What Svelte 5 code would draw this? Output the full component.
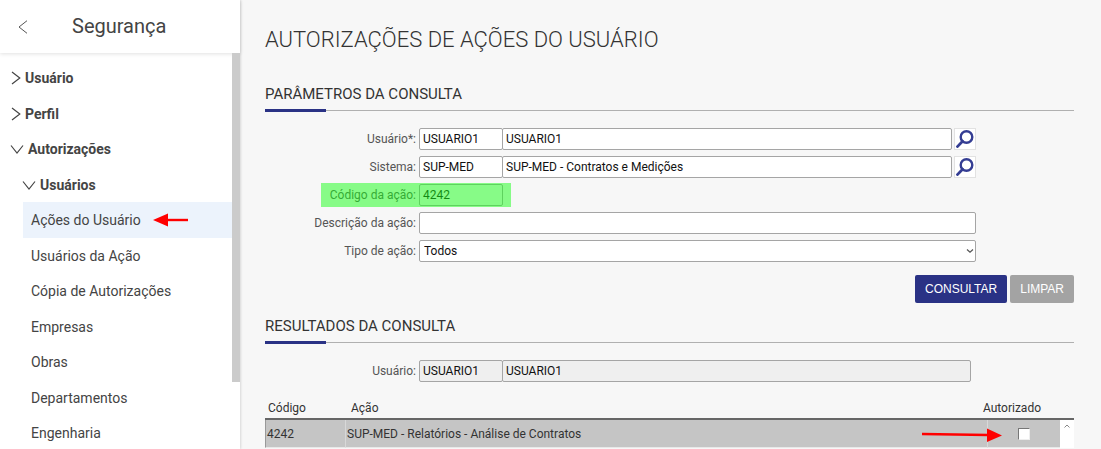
<script lang="ts">
  interface MenuItem {
    label: string;
    level: 'group' | 'subgroup' | 'page';
    open?: boolean;
    active?: boolean;
  }

  const menu: MenuItem[] = [
    { label: 'Usuário', level: 'group' },
    { label: 'Perfil', level: 'group' },
    { label: 'Autorizações', level: 'group', open: true },
    { label: 'Usuários', level: 'subgroup', open: true },
    { label: 'Ações do Usuário', level: 'page', active: true },
    { label: 'Usuários da Ação', level: 'page' },
    { label: 'Cópia de Autorizações', level: 'page' },
    { label: 'Empresas', level: 'page' },
    { label: 'Obras', level: 'page' },
    { label: 'Departamentos', level: 'page' },
    { label: 'Engenharia', level: 'page' },
  ];

  let userCode = $state('USUARIO1');
  let userName = $state('USUARIO1');
  let systemCode = $state('SUP-MED');
  let systemName = $state('SUP-MED - Contratos e Medições');
  let actionCode = $state('4242');
  let description = $state('');
  let actionType = $state('Todos');
  let authorized = $state(false);

  function clear() {
    userCode = userName = systemCode = systemName = actionCode = description = '';
  }
</script>

{#snippet searchButton(label: string)}
  <button class="search" type="button" aria-label={label}>
    <svg width="20" height="20" viewBox="0 0 20 20" fill="none" stroke="#343d93">
      <circle cx="11.5" cy="8" r="5.8" stroke-width="2.4" />
      <path d="M7.6 12.2 2.4 17.6" stroke-width="2.8" stroke-linecap="round" />
    </svg>
  </button>
{/snippet}

<div class="page">
  <aside class="sidebar">
    <header>
      <button class="back" type="button" aria-label="Voltar">
        <svg width="10" height="14" viewBox="0 0 10 14" fill="none" stroke="#555">
          <path d="M9 .7 1 7l8 6.300" />
        </svg>
      </button>
      <span class="title">Segurança</span>
    </header>
    <div class="scroll-area">
      <nav>
        <ul>
          {#each menu as item}
            <li class={item.level} class:active={item.active}>
              {#if item.level === 'page'}
                <a href="#pagina">{item.label}</a>
                {#if item.active}
                  <svg class="pointer" width="36" height="14" viewBox="0 0 36 14">
                    <path d="M0 7 15 .5v13z" fill="red" />
                    <path d="M14 7h21" stroke="red" stroke-width="2.4" />
                  </svg>
                {/if}
              {:else}
                <button type="button" aria-expanded={!!item.open}>
                  {#if item.open}
                    <svg width="14" height="14" viewBox="0 0 14 14" fill="none" stroke="#444" stroke-width="1.2">
                      <path d="M1 3.5 7 11l6-7.5" />
                    </svg>
                  {:else}
                    <svg width="11" height="14" viewBox="0 0 11 14" fill="none" stroke="#444" stroke-width="1.2">
                      <path d="M2 1l7.800 6L2 13" />
                    </svg>
                  {/if}
                  {item.label}
                </button>
              {/if}
            </li>
          {/each}
        </ul>
      </nav>
      <div class="scrollbar"></div>
    </div>
  </aside>

  <main>
    <h1>AUTORIZAÇÕES DE AÇÕES DO USUÁRIO</h1>

    <h2>PARÂMETROS DA CONSULTA</h2>
    <form onsubmit={(e) => e.preventDefault()}>
      <div class="row">
        <label for="user">Usuário*:</label>
        <div class="fields">
          <input id="user" class="code" type="text" bind:value={userCode} />
          <input class="name" type="text" aria-label="Nome do usuário" bind:value={userName} />
          {@render searchButton('Pesquisar usuário')}
        </div>
      </div>
      <div class="row">
        <label for="system">Sistema:</label>
        <div class="fields">
          <input id="system" class="code" type="text" bind:value={systemCode} />
          <input class="name" type="text" aria-label="Nome do sistema" bind:value={systemName} />
          {@render searchButton('Pesquisar sistema')}
        </div>
      </div>
      <div class="row highlight">
        <label for="action">Código da ação:</label>
        <div class="fields">
          <input id="action" class="code" type="text" bind:value={actionCode} />
        </div>
      </div>
      <div class="row">
        <label for="description">Descrição da ação:</label>
        <div class="fields">
          <input id="description" class="wide" type="text" bind:value={description} />
        </div>
      </div>
      <div class="row">
        <label for="type">Tipo de ação:</label>
        <div class="fields select">
          <select id="type" bind:value={actionType}>
            <option>Todos</option>
          </select>
          <svg width="8" height="6" viewBox="0 0 8 6" fill="none" stroke="#555" stroke-width="1.2">
            <path d="M1 1.5 4 4.3 7 1.5" />
          </svg>
        </div>
      </div>
      <div class="actions">
        <button class="primary" type="submit">CONSULTAR</button>
        <button type="button" onclick={clear}>LIMPAR</button>
      </div>
    </form>

    <h2>RESULTADOS DA CONSULTA</h2>
    <div class="row result">
      <label for="result-user">Usuário:</label>
      <div class="fields">
        <input id="result-user" class="code" type="text" value="USUARIO1" readonly />
        <input class="name" type="text" aria-label="Nome do usuário" value="USUARIO1" readonly />
      </div>
    </div>

    <div class="grid">
      <table>
        <colgroup>
          <col class="col-code" />
          <col />
          <col class="col-gap" />
          <col class="col-check" />
        </colgroup>
        <thead>
          <tr>
            <th>Código</th>
            <th class="th-action">Ação</th>
            <th class="th-check" colspan="2">Autorizado</th>
          </tr>
        </thead>
        <tbody>
          <tr>
            <td>4242</td>
            <td colspan="2">SUP-MED - Relatórios - Análise de Contratos</td>
            <td class="check">
              <svg class="arrow" width="80" height="14" viewBox="0 0 80 14">
                <path d="M0 6l66 1" stroke="red" stroke-width="2.4" />
                <path d="M80 7.5 65 .5v13.5z" fill="red" />
              </svg>
              <input type="checkbox" aria-label="Autorizado" bind:checked={authorized} />
            </td>
          </tr>
        </tbody>
      </table>
      <div class="grid-scroll">
        <svg width="6" height="4" viewBox="0 0 6 4" fill="none" stroke="#888">
          <path d="M.5 3.500 3 1l2.500 2.500" />
        </svg>
      </div>
    </div>
  </main>
</div>

<style>
  :global(body) {
    background: #f7f7f7;
  }

  .page {
    display: flex;
    height: 100vh;
    overflow: hidden;
    font-family: Roboto, sans-serif;
    font-size: 12px;
    color: #444;
  }

  .page * {
    box-sizing: border-box;
  }

  button,
  input,
  select {
    font: inherit;
    margin: 0;
  }

  svg {
    display: block;
    flex: none;
  }

  .sidebar {
    display: flex;
    flex-direction: column;
    flex: none;
    width: 240px;
    background: #fff;
    box-shadow: 1px 0 2px rgba(0, 0, 0, 0.12);
  }

  header {
    display: flex;
    align-items: center;
    flex: none;
    height: 53px;
    padding-left: 18px;
    box-shadow: 0 1px 4px rgba(0, 0, 0, 0.12);
  }

  .back {
    padding: 0;
    border: 0;
    background: none;
  }

  .title {
    margin-left: 44px;
    padding-bottom: 2px;
    font-size: 20px;
    line-height: 24px;
  }

  .scroll-area {
    display: flex;
    flex: 1;
    min-height: 0;
  }

  nav {
    flex: 1;
    overflow: hidden;
  }

  .scrollbar {
    width: 8px;
    height: 83%;
    background: #cbcbcb;
  }

  ul {
    display: grid;
    grid-auto-rows: 36px 35px;
    margin: 0;
    padding: 7px 0 0;
    list-style: none;
    font-size: 14px;
  }

  li {
    display: flex;
    align-items: center;
    padding-left: 10px;
  }

  li.subgroup {
    padding-left: 22px;
  }

  li.page {
    height: auto;
    margin-left: 23px;
    padding-left: 8px;
    font-size: inherit;
  }

  li.active {
    background: #ecf3fc;
  }

  li button {
    display: flex;
    align-items: center;
    gap: 4px;
    padding: 0;
    border: 0;
    background: none;
    font-weight: 700;
    color: #444;
  }

  li a {
    color: #444;
    text-decoration: none;
  }

  .pointer {
    margin-left: 12px;
  }

  main {
    flex: 1;
    min-width: 0;
    padding: 24px 27px 0 25px;
  }

  h1 {
    margin: 0;
    font-size: 22px;
    font-weight: 300;
    line-height: 32px;
    color: #333;
  }

  h2 {
    margin: 0 0 17px;
    border-bottom: 1px solid #b0b0b0;
    font-size: 15px;
    font-weight: 400;
    line-height: 22px;
    color: #333;
  }

  h2::after {
    content: '';
    display: block;
    width: 61px;
    height: 3px;
    margin: 4px 0 -2px;
    background: #2a3285;
  }

  h1 + h2 {
    margin-top: 27px;
  }

  form {
    display: grid;
    gap: 6px;
    margin-bottom: 12px;
  }

  .row {
    display: grid;
    grid-template-columns: 151px minmax(0, 1fr);
    gap: 3px;
    align-items: center;
    position: relative;
    padding-right: 98px;
  }

  label {
    text-align: right;
    color: #555;
  }

  .fields {
    display: flex;
    height: 22px;
  }

  .fields input,
  select {
    min-width: 0;
    height: 22px;
    padding: 0 3px;
    border: 1px solid #a5a5a5;
    border-radius: 2px;
    background: #fff;
    color: #111;
  }

  .fields .code {
    width: 84px;
  }

  .fields .name {
    flex: 1;
    margin-left: -1px;
  }

  .fields .wide,
  select {
    flex: 1;
  }

  .search {
    display: flex;
    align-items: center;
    justify-content: center;
    width: 22px;
    margin-left: 2px;
    padding: 0;
    border: 1px solid #e2e2e2;
    background: #fff;
  }

  /* marker strip drawn over the label and its field */
  .highlight::after {
    content: '';
    position: absolute;
    top: -1px;
    bottom: -1px;
    left: 56px;
    width: 190px;
    background: rgba(24, 255, 24, 0.5);
    pointer-events: none;
  }

  .highlight input {
    background: #f7f7f7;
  }

  .select {
    position: relative;
  }

  select {
    appearance: none;
    padding-left: 4px;
  }

  .select svg {
    position: absolute;
    top: 8px;
    right: 2px;
    pointer-events: none;
  }

  .actions {
    display: flex;
    justify-content: flex-end;
    gap: 3px;
    margin-top: 7px;
  }

  .actions button {
    height: 28px;
    padding: 0 10px;
    border: 0;
    border-radius: 2px;
    background: #a3a3a3;
    font-family: 'Liberation Sans', Arial, sans-serif;
    font-size: 12px;
    color: #fff;
  }

  .actions .primary {
    background: #2a3285;
  }

  .result {
    padding-right: 103px;
  }

  .result input {
    background: #efefef;
  }

  .grid {
    display: flex;
    margin-top: 15px;
  }

  table {
    flex: 1;
    table-layout: fixed;
    border-collapse: separate;
    border-spacing: 0;
    color: #333;
  }

  .col-code {
    width: 81px;
  }

  .col-gap {
    width: 8px;
  }

  .col-check {
    width: 72px;
  }

  th {
    height: 23px;
    padding: 0 3px;
    border-bottom: 2px solid #666;
    font-weight: 400;
    text-align: left;
  }

  .th-action {
    padding-left: 5px;
  }

  .th-check {
    padding: 0 19px 0 0;
    text-align: right;
  }

  td {
    height: 28px;
    padding: 0 1px;
    border-right: 1px solid #d8d8d8;
    border-bottom: 1px solid #e8e8e8;
    background: #c5c5c5;
  }

  td:first-child {
    border-left: 1px solid #999;
  }

  .check {
    position: relative;
    border-right: 0;
  }

  .check input {
    display: block;
    appearance: none;
    width: 12px;
    height: 12px;
    margin: 0 auto;
    border: 1px solid #eee;
    border-top-color: #777;
    border-left-color: #777;
    background: #fff;
  }

  .check input:checked {
    background: #2a3285;
  }

  .arrow {
    position: absolute;
    top: 8px;
    right: 58px;
  }

  .grid-scroll {
    display: flex;
    justify-content: center;
    width: 14px;
    margin-top: 21px;
    padding-top: 4px;
    border-top: 2px solid #666;
    background: #fff;
  }
</style>
